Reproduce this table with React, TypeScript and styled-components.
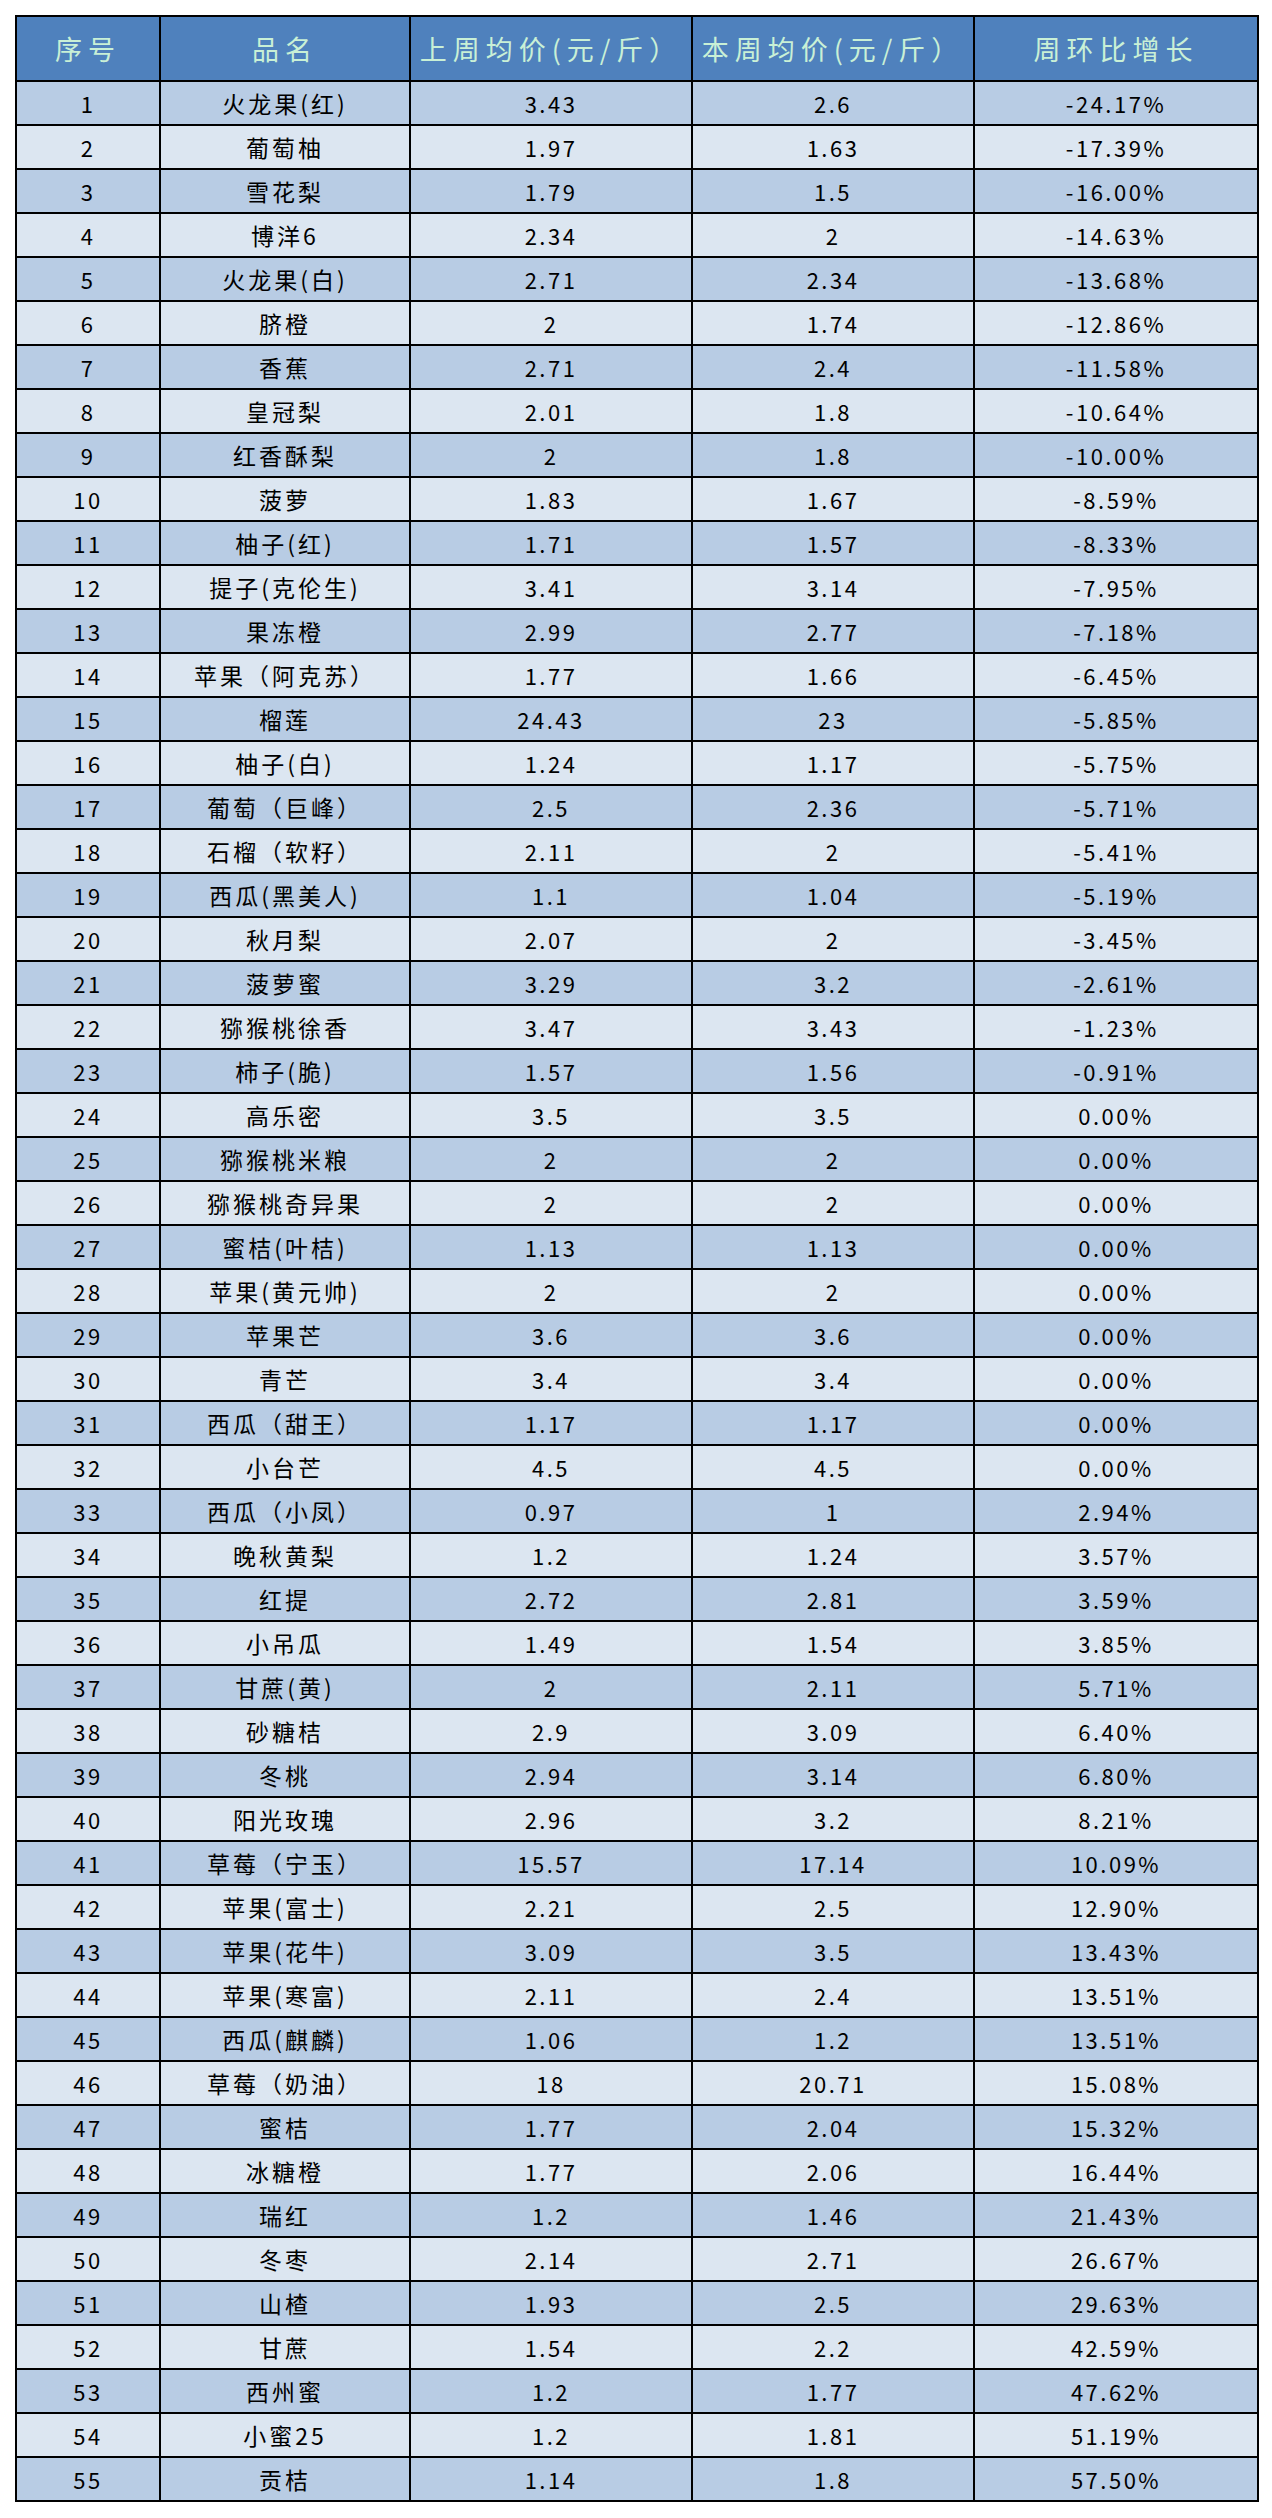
import React from "react";
import styled, { createGlobalStyle } from "styled-components";

const GlobalStyle = createGlobalStyle`
  body {
    margin: 0;
    background: #ffffff;
    font-family: "Noto Sans CJK SC", "Noto Sans", sans-serif;
  }
`;

const Page = styled.div`
  padding: 15px 15px 16px 15px;
`;

const Table = styled.table`
  width: 1242px;
  border-collapse: collapse;
  table-layout: fixed;
  border: 2px solid #000;
`;

const HeadCell = styled.th`
  height: 63px;
  padding: 0;
  background: #4f81bd;
  border: 2px solid #000;
  color: #c9f0d6;
  font-size: 27px;
  font-weight: 400;
  letter-spacing: 6px;
  text-align: center;
  vertical-align: middle;
`;

const Row = styled.tr<{ $odd: boolean }>`
  background: ${(p) => (p.$odd ? "#b8cce4" : "#dce6f1")};
`;

const Cell = styled.td<{ $name?: boolean }>`
  height: 42px;
  padding: 0;
  border: 2px solid #000;
  color: #000;
  font-size: ${(p) => (p.$name ? "23px" : "22px")};
  letter-spacing: ${(p) => (p.$name ? "3px" : "2.5px")};
  text-align: center;
  vertical-align: middle;
  line-height: 1;
`;

const rows: [string, string, string, string][] = [
  ["火龙果(红)", "3.43", "2.6", "-24.17%"],
  ["葡萄柚", "1.97", "1.63", "-17.39%"],
  ["雪花梨", "1.79", "1.5", "-16.00%"],
  ["博洋6", "2.34", "2", "-14.63%"],
  ["火龙果(白)", "2.71", "2.34", "-13.68%"],
  ["脐橙", "2", "1.74", "-12.86%"],
  ["香蕉", "2.71", "2.4", "-11.58%"],
  ["皇冠梨", "2.01", "1.8", "-10.64%"],
  ["红香酥梨", "2", "1.8", "-10.00%"],
  ["菠萝", "1.83", "1.67", "-8.59%"],
  ["柚子(红)", "1.71", "1.57", "-8.33%"],
  ["提子(克伦生)", "3.41", "3.14", "-7.95%"],
  ["果冻橙", "2.99", "2.77", "-7.18%"],
  ["苹果（阿克苏）", "1.77", "1.66", "-6.45%"],
  ["榴莲", "24.43", "23", "-5.85%"],
  ["柚子(白)", "1.24", "1.17", "-5.75%"],
  ["葡萄（巨峰）", "2.5", "2.36", "-5.71%"],
  ["石榴（软籽）", "2.11", "2", "-5.41%"],
  ["西瓜(黑美人)", "1.1", "1.04", "-5.19%"],
  ["秋月梨", "2.07", "2", "-3.45%"],
  ["菠萝蜜", "3.29", "3.2", "-2.61%"],
  ["猕猴桃徐香", "3.47", "3.43", "-1.23%"],
  ["柿子(脆)", "1.57", "1.56", "-0.91%"],
  ["高乐密", "3.5", "3.5", "0.00%"],
  ["猕猴桃米粮", "2", "2", "0.00%"],
  ["猕猴桃奇异果", "2", "2", "0.00%"],
  ["蜜桔(叶桔)", "1.13", "1.13", "0.00%"],
  ["苹果(黄元帅)", "2", "2", "0.00%"],
  ["苹果芒", "3.6", "3.6", "0.00%"],
  ["青芒", "3.4", "3.4", "0.00%"],
  ["西瓜（甜王）", "1.17", "1.17", "0.00%"],
  ["小台芒", "4.5", "4.5", "0.00%"],
  ["西瓜（小凤）", "0.97", "1", "2.94%"],
  ["晚秋黄梨", "1.2", "1.24", "3.57%"],
  ["红提", "2.72", "2.81", "3.59%"],
  ["小吊瓜", "1.49", "1.54", "3.85%"],
  ["甘蔗(黄)", "2", "2.11", "5.71%"],
  ["砂糖桔", "2.9", "3.09", "6.40%"],
  ["冬桃", "2.94", "3.14", "6.80%"],
  ["阳光玫瑰", "2.96", "3.2", "8.21%"],
  ["草莓（宁玉）", "15.57", "17.14", "10.09%"],
  ["苹果(富士)", "2.21", "2.5", "12.90%"],
  ["苹果(花牛)", "3.09", "3.5", "13.43%"],
  ["苹果(寒富)", "2.11", "2.4", "13.51%"],
  ["西瓜(麒麟)", "1.06", "1.2", "13.51%"],
  ["草莓（奶油）", "18", "20.71", "15.08%"],
  ["蜜桔", "1.77", "2.04", "15.32%"],
  ["冰糖橙", "1.77", "2.06", "16.44%"],
  ["瑞红", "1.2", "1.46", "21.43%"],
  ["冬枣", "2.14", "2.71", "26.67%"],
  ["山楂", "1.93", "2.5", "29.63%"],
  ["甘蔗", "1.54", "2.2", "42.59%"],
  ["西州蜜", "1.2", "1.77", "47.62%"],
  ["小蜜25", "1.2", "1.81", "51.19%"],
  ["贡桔", "1.14", "1.8", "57.50%"],
];

export default function App() {
  return (
    <Page>
      <GlobalStyle />
      <Table>
        <colgroup>
          <col style={{ width: 144 }} />
          <col style={{ width: 250 }} />
          <col style={{ width: 282 }} />
          <col style={{ width: 282 }} />
          <col style={{ width: 284 }} />
        </colgroup>
        <thead>
          <tr>
            <HeadCell>序号</HeadCell>
            <HeadCell>品名</HeadCell>
            <HeadCell>上周均价(元/斤）</HeadCell>
            <HeadCell>本周均价(元/斤）</HeadCell>
            <HeadCell>周环比增长</HeadCell>
          </tr>
        </thead>
        <tbody>
          {rows.map((r, i) => (
            <Row key={i} $odd={i % 2 === 0}>
              <Cell>{i + 1}</Cell>
              <Cell $name>{r[0]}</Cell>
              <Cell>{r[1]}</Cell>
              <Cell>{r[2]}</Cell>
              <Cell>{r[3]}</Cell>
            </Row>
          ))}
        </tbody>
      </Table>
    </Page>
  );
}
